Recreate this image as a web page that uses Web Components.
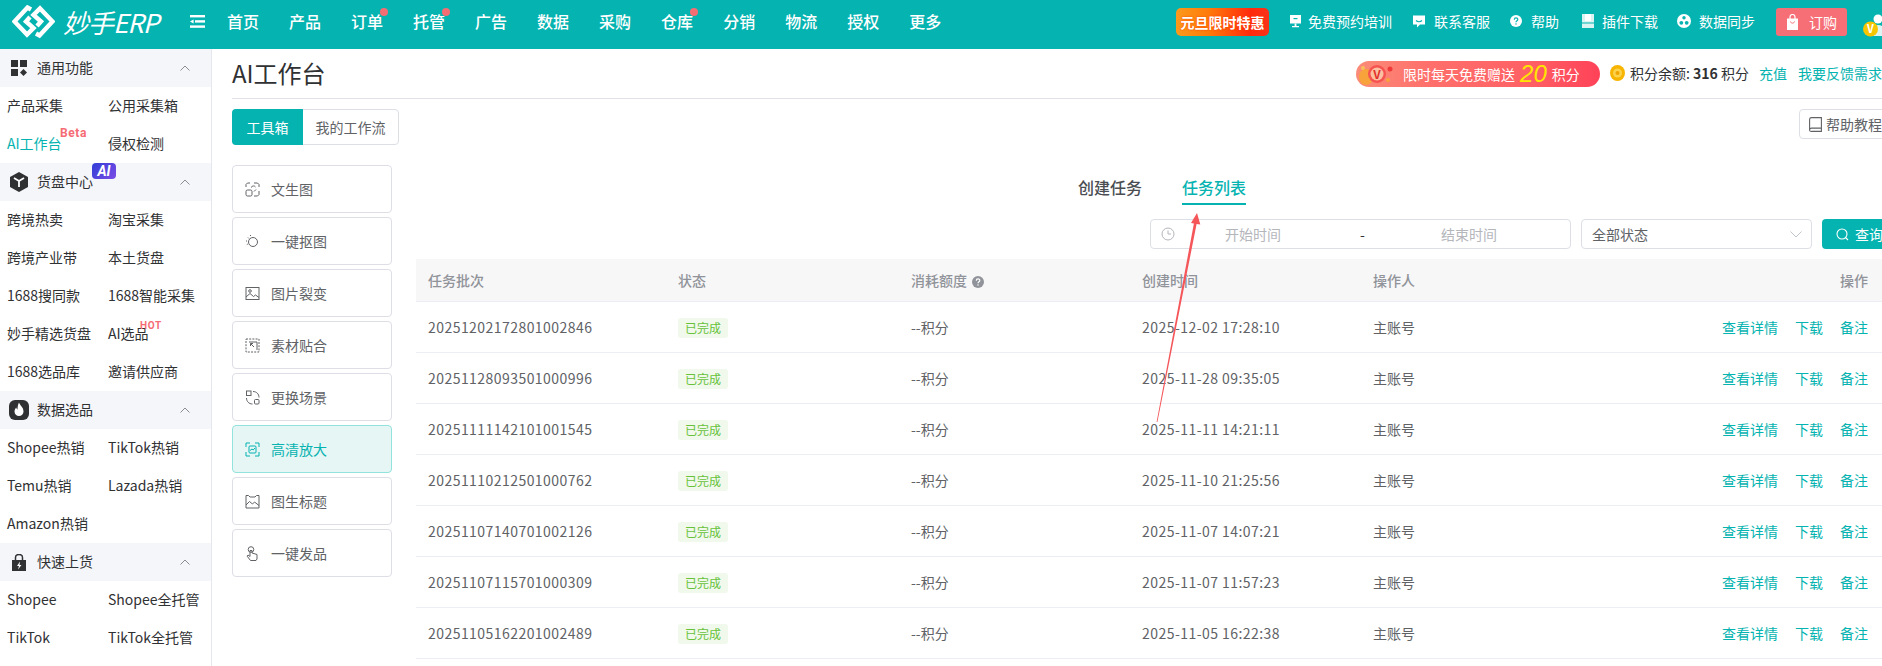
<!DOCTYPE html>
<html lang="zh">
<head>
<meta charset="utf-8">
<title>妙手ERP</title>
<style>
html,body{margin:0;height:100%;overflow:hidden;background:#fff;}
body{font-family:"Noto Sans CJK SC","Noto Sans",sans-serif;font-size:14px;color:#303133;position:relative;}
</style>
</head>
<body>
<erp-app></erp-app>
<script>
const TEAL = '#05b3b0'

class ErpApp extends HTMLElement {
    connectedCallback() {
        this.attachShadow({ mode: 'open' })
        this.shadowRoot.innerHTML = `<style>
            :host{display:flex;flex-direction:column;width:1882px;height:666px;overflow:hidden;}
            .body{display:flex;flex:1;min-height:0;}
        </style>
        <erp-topbar></erp-topbar>
        <div class="body">
            <side-menu></side-menu>
            <work-panel></work-panel>
        </div>
        <arrow-mark></arrow-mark>`
    }
}

class ErpTopbar extends HTMLElement {
    connectedCallback() {
        this.attachShadow({ mode: 'open' })
        const nav = [['首页'], ['产品'], ['订单', 1], ['托管', 1], ['广告'], ['数据'], ['采购'], ['仓库', 1], ['分销'], ['物流'], ['授权'], ['更多']]
            .map(n => `<a>${n[0]}${n[1] ? '<i></i>' : ''}</a>`).join('')
        this.shadowRoot.innerHTML = `<style>
            :host{display:flex;flex:none;height:49px;background:${TEAL};color:#fff;align-items:center;overflow:hidden;padding-left:12px;}
            .logo{flex:none;display:block;margin-top:-6px;}
            .brand{font-size:26px;font-style:italic;font-weight:400;margin-left:8px;width:90px;white-space:nowrap;letter-spacing:-1px;line-height:49px;margin-top:-6px;}
            .fold{flex:none;margin:-6px 7px 0 37px;display:block;}
            nav{display:flex;flex:1;margin-top:-7px;}
            nav a{position:relative;padding:0 15px;font-size:16px;font-weight:500;line-height:24px;}
            nav i{position:absolute;width:8px;height:8px;border-radius:50%;background:#f46d72;right:10px;top:-1px;}
            .right{display:flex;align-items:center;flex:none;margin-top:-5px;}
            .promo{width:93px;height:28px;box-sizing:border-box;border-radius:5px;background:linear-gradient(90deg,#fb9a1c 0%,#ff7a0a 35%,#ff2a0c 80%,#f8331a 100%);font-weight:700;font-size:14px;display:flex;align-items:center;justify-content:center;white-space:nowrap;margin-right:20px;text-shadow:0 0 2px #ff3a00;}
            .lnk{display:flex;align-items:center;gap:6px;margin-right:19px;white-space:nowrap;font-size:14px;margin-top:-2px;}
            .lnk svg{flex:none;display:block;}
            .buy{width:71px;height:28px;border-radius:3px;background:#f66f76;display:flex;align-items:center;justify-content:center;gap:10px;margin:0 16px 0 1px;}
            .avatar{width:19px;height:49px;overflow:hidden;flex:none;margin-top:5px;}
            .avatar svg{display:block;margin-top:3px;}
        </style>
        <svg class="logo" width="43" height="34" viewBox="12 5 43 34" fill="none" stroke="#fff" stroke-width="4.4">
            <path d="M31 9.5L27.5 7.5L14.5 21.5L27 34.5L33.5 28L26 21.5L30 17"/>
            <path d="M36 33.5L39.5 35.5L52.5 21.5L40 8.5L33.5 15L41 21.5L37 26"/>
        </svg>
        <div class="brand">妙手ERP</div>
        <svg class="fold" width="15" height="13" viewBox="0 0 15 13" fill="#fff">
            <rect width="15" height="2.4"/><rect x="5" y="5.2" width="10" height="2.4"/><rect y="10.4" width="15" height="2.4"/><path d="M0 6.4L3.6 4.4V8.4Z"/>
        </svg>
        <nav>${nav}</nav>
        <div class="right">
            <div class="promo">元旦限时特惠</div>
            <div class="lnk" style="margin-right:20px">
                <svg width="13" height="14" viewBox="0 0 13 14" fill="#fff"><path d="M1 1h11v8.5H1z"/><path d="M4.5 4h4v1.2h-4z" fill="${TEAL}"/><path d="M5.6 9.5h1.8v2.5H10v1.2H3V12h2.6z"/></svg>
                <span>免费预约培训</span></div>
            <div class="lnk" style="gap:8px;margin-right:20px">
                <svg width="14" height="14" viewBox="0 0 14 14" fill="#fff"><path d="M1 1.5h12v9H8l-3 3v-3H1z"/><path d="M4 6.5c1.5 1.6 4.500 1.600 6 0" fill="none" stroke="${TEAL}" stroke-width="1.100"/></svg>
                <span>联系客服</span></div>
            <div class="lnk" style="gap:9px;margin-right:23px">
                <svg width="12" height="12" viewBox="0 0 12 12"><circle cx="6" cy="6" r="6" fill="#fff"/><path d="M4.300 4.700c0-2.300 3.500-2.300 3.500-.200 0 1.300-1.800 1.300-1.800 2.700" fill="none" stroke="${TEAL}" stroke-width="1.200"/><rect x="5.400" y="8.300" width="1.200" height="1.300" fill="${TEAL}"/></svg>
                <span>帮助</span></div>
            <div class="lnk" style="gap:8px">
                <svg width="12" height="14" viewBox="0 0 12 14" fill="#fff"><rect width="12" height="14" opacity=".85"/><rect x="3" width="6" height="7"/><rect y="8.500" width="12" height="1" fill="${TEAL}"/></svg>
                <span>插件下载</span></div>
            <div class="lnk" style="gap:8px;margin-right:20px">
                <svg width="14" height="14" viewBox="0 0 14 14"><circle cx="7" cy="7" r="7" fill="#fff"/><circle cx="4.300" cy="8.800" r="1.900" fill="${TEAL}"/><circle cx="9.700" cy="8.800" r="1.900" fill="${TEAL}"/><circle cx="7" cy="3.800" r="1.700" fill="${TEAL}"/></svg>
                <span>数据同步</span></div>
            <div class="buy">
                <svg width="13" height="16" viewBox="0 0 13 16" fill="#fff"><path d="M1 4.500h11V16H1z"/><path d="M4 5V3a2.500 2.500 0 0 1 5 0v2" fill="none" stroke="#fff" stroke-width="1.200"/><path d="M4.500 7.500c.3 2.200 3.700 2.200 4 0" fill="none" stroke="#f66f76" stroke-width="1"/></svg>
                <span>订购</span></div>
            <div class="avatar">
                <svg width="26" height="49" viewBox="0 0 26 49">
                    <circle cx="15" cy="16" r="4.500" fill="#fff"/><path d="M7 33c0-8 3-11 8-11s8 3 8 11z" fill="#dff3f2"/>
                    <circle cx="7.500" cy="26" r="7.500" fill="#f7c600"/><text x="7.500" y="30" fill="#fff" font-size="11" font-weight="700" text-anchor="middle">V</text>
                </svg>
            </div>
        </div>`
    }
}

class SideMenu extends HTMLElement {
    connectedCallback() {
        this.attachShadow({ mode: 'open' })
        this.shadowRoot.innerHTML = `<style>
            :host{display:block;flex:none;width:212px;box-sizing:border-box;border-right:1px solid #e4e7ed;overflow:hidden;}
        </style>
        <side-group label="通用功能" icon="grid">
            <side-link>产品采集</side-link><side-link>公用采集箱</side-link>
            <side-link active badge="beta">AI工作台</side-link><side-link>侵权检测</side-link>
        </side-group>
        <side-group label="货盘中心" icon="box" ai>
            <side-link>跨境热卖</side-link><side-link>淘宝采集</side-link>
            <side-link>跨境产业带</side-link><side-link>本土货盘</side-link>
            <side-link>1688搜同款</side-link><side-link>1688智能采集</side-link>
            <side-link>妙手精选货盘</side-link><side-link badge="hot">AI选品</side-link>
            <side-link>1688选品库</side-link><side-link>邀请供应商</side-link>
        </side-group>
        <side-group label="数据选品" icon="fire">
            <side-link>Shopee热销</side-link><side-link>TikTok热销</side-link>
            <side-link>Temu热销</side-link><side-link>Lazada热销</side-link>
            <side-link>Amazon热销</side-link>
        </side-group>
        <side-group label="快速上货" icon="bag">
            <side-link>Shopee</side-link><side-link>Shopee全托管</side-link>
            <side-link>TikTok</side-link><side-link>TikTok全托管</side-link>
        </side-group>`
    }
}

const GROUP_ICONS = {
    grid: `<svg width="16" height="16" viewBox="0 0 16 16" fill="#303133"><rect width="7" height="7"/><rect x="9" width="7" height="7"/><rect y="9" width="7" height="7"/><path d="M12.500 9l3.500 3.500-3.500 3.500L9 12.500z"/></svg>`,
    box: `<svg width="18" height="20" viewBox="0 0 18 20"><path d="M9 0l9 5v10l-9 5-9-5V5z" fill="#303133"/><path d="M4 6l5 3 5-3M9 9v6" fill="none" stroke="#fff" stroke-width="1.800"/></svg>`,
    fire: `<svg width="20" height="20" viewBox="0 0 20 20"><rect width="20" height="20" rx="6" fill="#303133"/><path d="M10 2.500c.8 3 4.500 4.500 4.500 9a4.500 4.500 0 0 1-9 0c0-2 1-3 1.700-4 .3 1.200.8 1.700 1.300 2 0-2.500.5-5 1.500-7z" fill="#fff"/></svg>`,
    bag: `<svg width="14" height="17" viewBox="0 0 14 17"><path d="M0 6h14v11H0z" fill="#303133"/><path d="M3.500 6V3.500a3.500 3 0 0 1 7 0V6" fill="none" stroke="#303133" stroke-width="1.500"/><path d="M8 7.500L5 12h2l-1 3.500L9.500 11H7.500z" fill="#fff"/></svg>`
}

class SideGroup extends HTMLElement {
    connectedCallback() {
        this.attachShadow({ mode: 'open' })
        const icon = GROUP_ICONS[this.getAttribute('icon')]
        const ai = this.hasAttribute('ai') ? '<b class="ai">AI</b>' : ''
        this.shadowRoot.innerHTML = `<style>
            :host{display:block;}
            .head{position:relative;height:38px;background:#f5f6fa;display:flex;align-items:center;font-size:14px;color:#303133;}
            .ic{width:37px;flex:none;display:flex;justify-content:center;padding-left:7px;box-sizing:border-box;padding-right:7px;}
            .ic svg{display:block;flex:none;}
            .lbl{margin-top:-2px;}
            .chev{position:absolute;left:180px;top:16px;}
            .ai{position:absolute;left:92px;top:0;width:24px;height:16px;border-radius:4px;background:linear-gradient(135deg,#2f3fd6,#7d4be6);color:#fff;font:italic 700 14px/16px Roboto,sans-serif;text-align:center;}
            .items{display:grid;grid-template-columns:101px 101px;padding-left:7px;}
        </style>
        <div class="head"><span class="ic">${icon}</span><span class="lbl">${this.getAttribute('label')}</span>${ai}
            <svg class="chev" width="10" height="6" viewBox="0 0 10 6" fill="none" stroke="#8a8d94" stroke-width="1"><path d="M.5 5.500L5 1l4.500 4.500"/></svg>
        </div>
        <div class="items"><slot></slot></div>`
    }
}

class SideLink extends HTMLElement {
    connectedCallback() {
        this.attachShadow({ mode: 'open' })
        const badge = this.getAttribute('badge')
        let tag = ''
        if (badge === 'beta') tag = '<b class="beta">Beta</b>'
        if (badge === 'hot') tag = '<b class="hot">HOT</b>'
        const color = this.hasAttribute('active') ? TEAL : '#303133'
        this.shadowRoot.innerHTML = `<style>
            :host{display:block;height:38px;line-height:36px;font-size:14px;white-space:nowrap;color:${color};position:relative;}
            b{position:absolute;font-family:Roboto,sans-serif;font-weight:700;color:#f56c75;line-height:10px;}
            .beta{left:53px;top:3px;font-size:12px;letter-spacing:.6px;}
            .hot{left:32px;top:7px;font-size:10px;line-height:8px;letter-spacing:.7px;}
        </style><slot></slot>${tag}`
    }
}

class WorkPanel extends HTMLElement {
    connectedCallback() {
        this.attachShadow({ mode: 'open' })
        this.shadowRoot.innerHTML = `<style>
            :host{display:block;flex:none;width:1660px;margin-left:20px;}
            .top{height:50px;box-sizing:border-box;border-bottom:1px solid #e1e1e8;display:flex;align-items:center;position:relative;}
            h1{margin:-2px auto 0 0;font-size:24px;font-weight:400;color:#303133;line-height:48px;}
            .points{display:flex;align-items:center;margin:-1px 10px 0 0;white-space:nowrap;font-size:14px;}
            .coin{margin:0 5px 0 10px;display:block;}
            .points b{font-weight:700;}
            .points a{color:${TEAL};}
            .bar{display:flex;justify-content:space-between;margin-top:10px;}
            .switch{display:flex;height:36px;box-sizing:border-box;border:1px solid #dcdfe6;border-radius:4px;width:167px;}
            .switch span{display:flex;align-items:center;justify-content:center;}
            .switch .on{width:71px;margin:-1px 0 -1px -1px;background:${TEAL};color:#fff;border-radius:4px 0 0 4px;}
            .switch .off{flex:1;color:#606266;}
            .help{display:flex;align-items:center;gap:4px;height:30px;width:93px;box-sizing:border-box;border:1px solid #dcdfe6;border-radius:4px;padding-left:9px;color:#606266;white-space:nowrap;}
            .cols{display:flex;gap:24px;margin-top:20px;}
            .tools{display:flex;flex-direction:column;gap:4px;width:160px;flex:none;}
            .pane{flex:1;min-width:0;}
        </style>
        <div class="top">
            <h1>AI工作台</h1>
            <bonus-banner></bonus-banner>
            <div class="points">
                <svg class="coin" width="15" height="16" viewBox="0 0 15 16"><ellipse cx="7.500" cy="8" rx="7.500" ry="8" fill="#f7b500"/><circle cx="7.500" cy="8" r="4.500" fill="#fcd34d"/><circle cx="7.500" cy="8" r="2" fill="#f0a400"/></svg>
                <span>积分余额: <b>316</b> 积分</span>
                <a style="margin-left:10px">充值</a>
                <a style="margin-left:11px">我要反馈需求</a>
            </div>
        </div>
        <div class="bar">
            <div class="switch"><span class="on">工具箱</span><span class="off">我的工作流</span></div>
            <div class="help">
                <svg width="13" height="15" viewBox="0 0 13 15" fill="none" stroke="#606266" stroke-width="1.100"><path d="M2.500.6h9.900v10.500H2.500A1.900 1.900 0 0 0 .6 13V2.500A1.900 1.900 0 0 1 2.500.6z"/><path d="M.6 12.900a1.600 1.600 0 0 0 1.900 1.500h9.900v-3.300"/></svg>
                <span>帮助教程</span>
            </div>
        </div>
        <div class="cols">
            <div class="tools">
                <tool-card icon="text">文生图</tool-card>
                <tool-card icon="cut">一键抠图</tool-card>
                <tool-card icon="pic">图片裂变</tool-card>
                <tool-card icon="paste">素材贴合</tool-card>
                <tool-card icon="swap">更换场景</tool-card>
                <tool-card icon="hd" active>高清放大</tool-card>
                <tool-card icon="title">图生标题</tool-card>
                <tool-card icon="hand">一键发品</tool-card>
            </div>
            <div class="pane"><task-board></task-board></div>
        </div>`
    }
}

class BonusBanner extends HTMLElement {
    connectedCallback() {
        this.attachShadow({ mode: 'open' })
        this.shadowRoot.innerHTML = `<style>
            :host{display:flex;align-items:center;flex:none;width:244px;height:26px;margin-top:1px;border-radius:13px;position:relative;color:#fff;font-size:14px;white-space:nowrap;
                background:linear-gradient(90deg,#fa8c78 0%,#ff6f6b 30%,#ff6165 70%,#ff4258 100%);}
            svg{position:absolute;left:0;top:0;display:block;}
            .t{margin-left:47px;letter-spacing:0;}
            em{font:italic 400 24px/26px "Liberation Sans",sans-serif;color:#ffe500;margin:0 5px 0 5px;}
        </style>
        <svg width="44" height="26" viewBox="0 0 44 26">
            <ellipse cx="10" cy="16" rx="7" ry="8" fill="#f7a23b"/>
            <circle cx="21" cy="13" r="9" fill="#f6524f"/><circle cx="21" cy="13" r="6.500" fill="#fbc0a2"/>
            <text x="21" y="17.500" font-size="12" font-weight="700" fill="#e3312b" text-anchor="middle">V</text>
            <circle cx="34" cy="8" r="2.500" fill="#f03a3a"/><circle cx="7" cy="7" r="2" fill="#f8c05a"/><circle cx="32" cy="19" r="2" fill="#f7a23b"/>
        </svg>
        <span class="t">限时每天免费赠送</span><em>20</em><span>积分</span>`
    }
}

const TOOL_ICONS = {
    text: `<path d="M1 5V2.500L2.500 1H5M9 1h3.500L14 2.500V5M14 9v3.500L12.500 14H9"/><rect x="1" y="8" width="6" height="6" rx="1.500"/><path d="M6 5.500c1.500-2 3.500-2 4.500-.5M9 9.500l2-2"/>`,
    cut: `<circle cx="8" cy="8" r="4.500"/><path d="M3 3.500l1 1M1 7h1M5.500 1v1M1.800 10.500l1-.5" />`,
    pic: `<rect x="1" y="1.500" width="13" height="12"/><path d="M1 11l4-3.500 3.500 3 2-1.500 3.500 2.500"/><circle cx="5" cy="5" r="1.300"/>`,
    paste: `<path d="M1 1h13v13H1z" stroke-dasharray="2 1.200"/><path d="M4 4h8v8"/><path d="M5.500 5.500l3.500 3.500M5.500 5.500h2.500M5.500 5.500V8"/>`,
    swap: `<rect x="1.500" y="1" width="4.500" height="4.500"/><rect x="9.500" y="9.500" width="4.500" height="4.500" rx="1"/><path d="M8 1.500c3.500 0 6 2.500 6 6M7.500 14C4 14 1.500 11.500 1.500 8"/>`,
    hd: `<path d="M1 5V1h4M10 1h4v4M14 10v4h-4M5 14H1v-4"/><rect x="4" y="4" width="7" height="7" rx="1"/><path d="M5 8.500l2-1.500 1.200 1L10 6"/>`,
    title: `<path d="M1 14V1.500h2.500L5 3h5l1.500-1.500H14V14z"/><path d="M1 11l3.500-3.500 3 2.500 2-2 4.500 3.500"/>`,
    hand: `<circle cx="6" cy="3.500" r="2.800"/><path d="M5 4.500v6L3 9l-.8 1.200L5.500 14.500h5.500l1-1.500V8.500L7 7V4.500z"/>`
}

class ToolCard extends HTMLElement {
    connectedCallback() {
        this.attachShadow({ mode: 'open' })
        const active = this.hasAttribute('active')
        const color = active ? TEAL : '#606266'
        this.shadowRoot.innerHTML = `<style>
            :host{display:flex;align-items:center;height:48px;box-sizing:border-box;border:1px solid ${active ? '#93e3dd' : '#dedee6'};border-radius:4px;background:${active ? '#e5f6f5' : '#fff'};color:${color};font-size:14px;padding-left:12px;gap:11px;}
            svg{display:block;flex:none;}
        </style>
        <svg width="15" height="15" viewBox="0 0 15 15" fill="none" stroke="${color}" stroke-width="1">${TOOL_ICONS[this.getAttribute('icon')]}</svg>
        <slot></slot>`
    }
}

class TaskBoard extends HTMLElement {
    connectedCallback() {
        this.attachShadow({ mode: 'open' })
        this.shadowRoot.innerHTML = `<style>
            :host{display:block;}
            .tabs{display:flex;justify-content:center;gap:40px;padding-left:16px;font-size:16px;font-weight:500;}
            .tabs span{padding:11px 0 5px;line-height:22px;color:#4a4d52;border-bottom:2px solid transparent;}
            .tabs .on{color:${TEAL};border-bottom-color:${TEAL};}
            .filters{display:flex;justify-content:flex-end;gap:10px;margin-top:14px;height:30px;}
            .box{box-sizing:border-box;height:30px;border:1px solid #dcdfe6;border-radius:4px;display:flex;align-items:center;position:relative;background:#fff;}
            .date{width:421px;color:#b4b6bb;}
            .date span{position:absolute;white-space:nowrap;}
            .select{width:231px;padding-left:10px;color:#606266;}
            .select svg{position:absolute;right:9px;top:11px;}
            .go{width:70px;height:30px;border-radius:4px;background:${TEAL};color:#fff;display:flex;align-items:center;gap:6px;padding-left:14px;box-sizing:border-box;white-space:nowrap;}
            .go svg{flex:none;}
        </style>
        <div class="tabs"><span>创建任务</span><span class="on">任务列表</span></div>
        <div class="filters">
            <div class="box date">
                <svg style="margin-left:10px" width="14" height="14" viewBox="0 0 14 14" fill="none" stroke="#b4b6bb"><circle cx="7" cy="7" r="6"/><path d="M7 3.500V7h3"/></svg>
                <span style="left:74px">开始时间</span>
                <span style="left:209px;color:#303133">-</span>
                <span style="left:290px">结束时间</span>
            </div>
            <div class="box select">全部状态
                <svg width="12" height="7" viewBox="0 0 12 7" fill="none" stroke="#c0c4cc"><path d="M.5.500L6 6l5.500-5.500"/></svg>
            </div>
            <div class="go">
                <svg width="13" height="13" viewBox="0 0 13 13" fill="none" stroke="#fff" stroke-width="1.100"><circle cx="6" cy="6" r="5"/><path d="M9.500 9.500l2.500 2.500"/></svg>
                <span>查询</span>
            </div>
        </div>
        <task-table></task-table>`
    }
}

class TaskTable extends HTMLElement {
    connectedCallback() {
        this.attachShadow({ mode: 'open' })
        const rows = [
            ['20251202172801002846', '2025-12-02 17:28:10'],
            ['20251128093501000996', '2025-11-28 09:35:05'],
            ['20251111142101001545', '2025-11-11 14:21:11'],
            ['20251110212501000762', '2025-11-10 21:25:56'],
            ['20251107140701002126', '2025-11-07 14:07:21'],
            ['20251107115701000309', '2025-11-07 11:57:23'],
            ['20251105162201002489', '2025-11-05 16:22:38']
        ]
        const body = rows.map(r => `<tr>
            <td class="num">${r[0]}</td>
            <td><span class="tag">已完成</span></td>
            <td>--积分</td>
            <td class="num">${r[1]}</td>
            <td>主账号</td>
            <td class="ops"><a>查看详情</a><a>下载</a><a>备注</a></td>
        </tr>`).join('')
        this.shadowRoot.innerHTML = `<style>
            :host{display:block;margin-top:10px;}
            table{border-collapse:collapse;table-layout:fixed;width:100%;font-size:14px;color:#606266;}
            th{height:42px;background:#f7f7f8;color:#909399;font-weight:500;text-align:left;padding:0 12px;border-bottom:1px solid #ebeef5;}
            td{height:50px;padding:0 12px;border-bottom:1px solid #ebeef5;white-space:nowrap;}
            th:last-child,td:last-child{text-align:right;padding-right:24px;}
            .num{letter-spacing:.45px;}
            .tip{display:inline-block;vertical-align:-2px;margin-left:2px;}
            .tag{display:inline-block;width:50px;height:20px;line-height:20px;border-radius:3px;background:#f0f9eb;color:#67c23a;font-size:12px;text-align:center;}
            .ops a{color:${TEAL};margin-left:17px;}
        </style>
        <table>
            <colgroup><col style="width:250px"><col style="width:233px"><col style="width:231px"><col style="width:231px"><col style="width:231px"><col></colgroup>
            <thead><tr><th>任务批次</th><th>状态</th>
                <th>消耗额度 <svg class="tip" width="12" height="12" viewBox="0 0 12 12"><circle cx="6" cy="6" r="6" fill="#909399"/><path d="M4.300 4.700c0-2.300 3.500-2.300 3.500-.200 0 1.300-1.800 1.300-1.800 2.700" fill="none" stroke="#fff" stroke-width="1.200"/><rect x="5.400" y="8.300" width="1.200" height="1.300" fill="#fff"/></svg></th>
                <th>创建时间</th><th>操作人</th><th>操作</th></tr></thead>
            <tbody>${body}</tbody>
        </table>`
    }
}

// the red annotation arrow lies over the page, so it is placed on its own layer
class ArrowMark extends HTMLElement {
    connectedCallback() {
        this.attachShadow({ mode: 'open' })
        this.shadowRoot.innerHTML = `<style>
            :host{position:absolute;left:0;top:0;width:1882px;height:666px;pointer-events:none;}
            svg{display:block;}
        </style>
        <svg width="1882" height="666" viewBox="0 0 1882 666">
            <path d="M1197 213L1200.300 224.500L1196.600 224L1157.400 422L1156.600 422L1193.900 223.600L1191 223Z" fill="#f4565a"/>
        </svg>`
    }
}

customElements.define('erp-app', ErpApp)
customElements.define('erp-topbar', ErpTopbar)
customElements.define('side-menu', SideMenu)
customElements.define('side-group', SideGroup)
customElements.define('side-link', SideLink)
customElements.define('work-panel', WorkPanel)
customElements.define('bonus-banner', BonusBanner)
customElements.define('tool-card', ToolCard)
customElements.define('task-board', TaskBoard)
customElements.define('task-table', TaskTable)
customElements.define('arrow-mark', ArrowMark)
</script>
</body>
</html>
